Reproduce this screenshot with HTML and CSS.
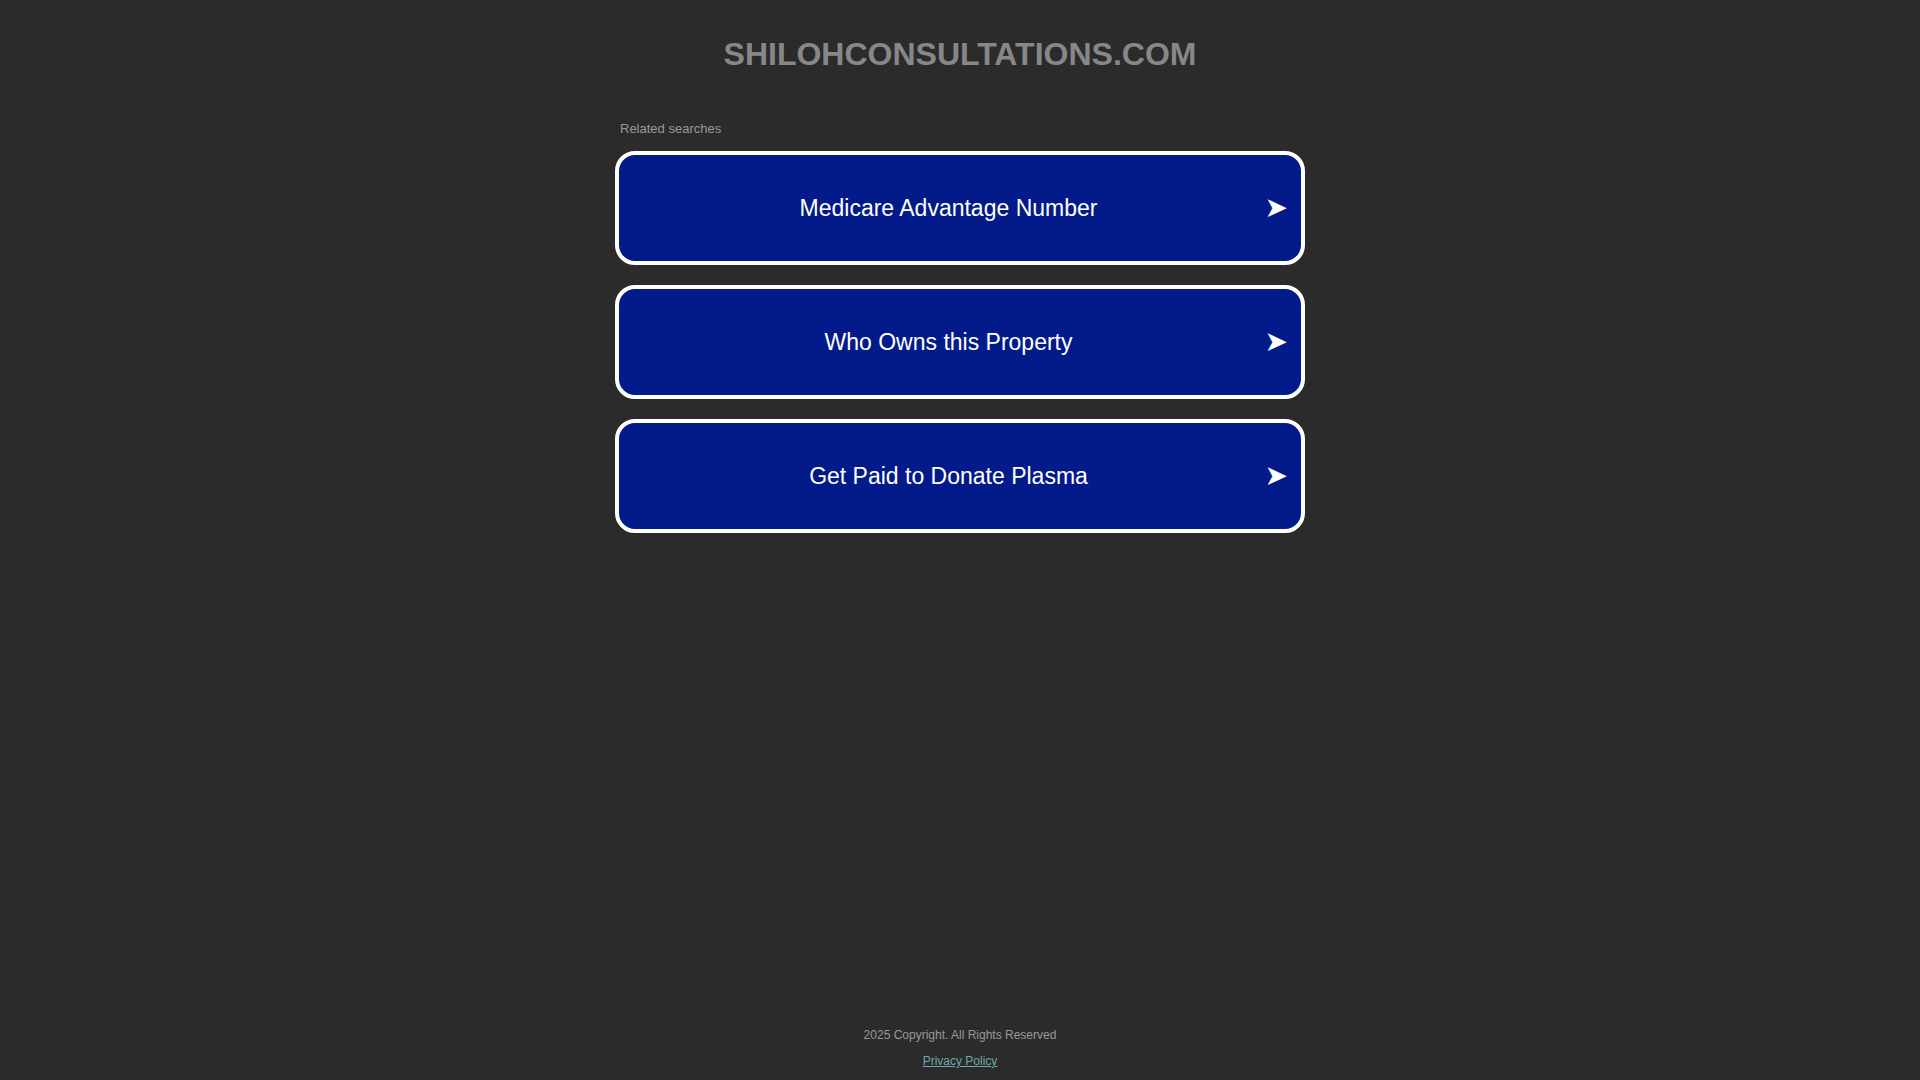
FILE: index.html
```html
<!DOCTYPE html>
<html lang="en">
<head>
<meta charset="utf-8">
<title>shilohconsultations.com</title>
<link rel="stylesheet" href="styles.css">
</head>
<body>
<div class="page">
  <header class="header">
    <h1 class="domain">SHILOHCONSULTATIONS.COM</h1>
  </header>
  <main class="main">
    <div class="related">
      <p class="related-title">Related searches</p>
      <a class="result" href="#"><span class="result-text">Medicare Advantage Number</span><span class="arrow">➤</span></a>
      <a class="result" href="#"><span class="result-text">Who Owns this Property</span><span class="arrow">➤</span></a>
      <a class="result" href="#"><span class="result-text">Get Paid to Donate Plasma</span><span class="arrow">➤</span></a>
    </div>
  </main>
  <footer class="footer">
    <p class="copyright">2025 Copyright. All Rights Reserved</p>
    <a class="privacy" href="#">Privacy Policy</a>
  </footer>
</div>
</body>
</html>
```
FILE: styles.css
```css
html, body {
  margin: 0;
  padding: 0;
  background: #2b2b2b;
  font-family: "Liberation Sans", Arial, sans-serif;
}
.page {
  min-height: 100vh;
  display: flex;
  flex-direction: column;
  align-items: center;
}
.header {
  padding-top: 35px;
}
.domain {
  margin: 0;
  font-size: 32px;
  line-height: 38px;
  font-weight: bold;
  color: #878787;
  text-align: center;
}
.main {
  flex: 1;
  width: 690px;
  padding-top: 48px;
}
.related {
  display: flex;
  flex-direction: column;
  gap: 20px;
}
.related-title {
  margin: 0 0 -6px 0;
  padding-left: 5px;
  font-size: 13px;
  line-height: 16px;
  color: #999999;
}
.result {
  position: relative;
  display: flex;
  align-items: center;
  justify-content: center;
  box-sizing: border-box;
  height: 114px;
  padding-top: 1px;
  border: 4px solid #ffffff;
  border-radius: 20px;
  background: #021a8a;
  color: #ffffff;
  text-decoration: none;
  font-size: 23px;
}
.result-text {
  margin-right: 23px;
}
.arrow {
  position: absolute;
  right: 13px;
  top: 50%;
  transform: translateY(-52%);
  font-family: "DejaVu Sans", sans-serif;
  font-size: 28px;
}
.footer {
  display: flex;
  flex-direction: column;
  align-items: center;
  padding-bottom: 11px;
}
.copyright {
  margin: 0 0 10px 0;
  font-size: 12px;
  line-height: 16px;
  color: #999999;
}
.privacy {
  font-size: 12px;
  line-height: 16px;
  color: #6fa8ad;
}
```
